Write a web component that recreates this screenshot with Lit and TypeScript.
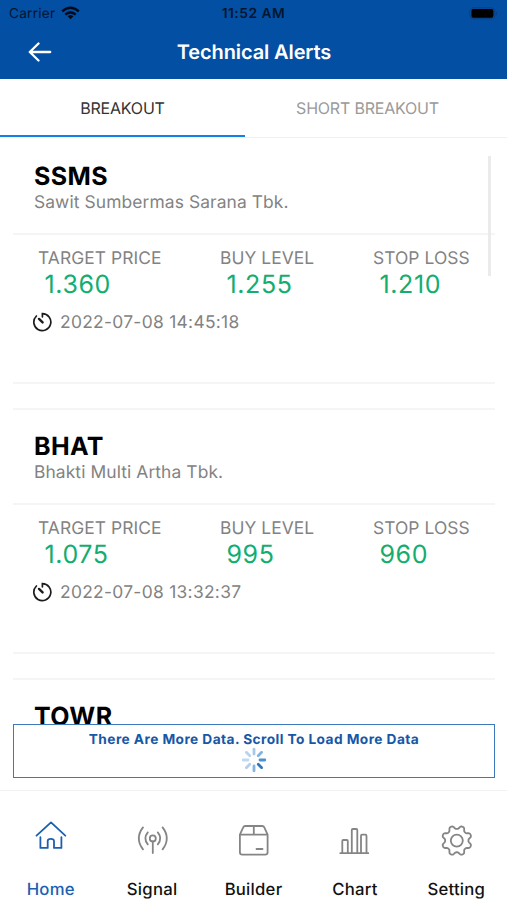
import { LitElement, html, css, svg } from "lit";
import { customElement, property } from "lit/decorators.js";

interface Alert {
  code: string;
  name: string;
  target: string;
  buy: string;
  stop: string;
  time: string;
}

const ALERTS: Alert[] = [
  { code: "SSMS", name: "Sawit Sumbermas Sarana Tbk.", target: "1.360", buy: "1.255", stop: "1.210", time: "2022-07-08 14:45:18" },
  { code: "BHAT", name: "Bhakti Multi Artha Tbk.", target: "1.075", buy: "995", stop: "960", time: "2022-07-08 13:32:37" },
];

const gearPath = (() => {
  const points: string[] = [];
  for (let deg = 0; deg < 360; deg += 3) {
    const wave = Math.cos(((deg - 22.5) * 8 * Math.PI) / 180);
    const r = 13.3 + 1.8 * Math.tanh(1.6 * wave);
    const a = (deg * Math.PI) / 180;
    points.push(`${(16.8 + r * Math.cos(a)).toFixed(2)} ${(15.6 + r * Math.sin(a)).toFixed(2)}`);
  }
  return `M${points.join("L")}Z`;
})();

const ICONS = {
  home: svg`<path d="M2.5 10.7 17-2.6 31.3 10.7M6.4 12.2V22.9H13.7V16Q13.7 13.9 16.9 13.9T20 16V22.9H27.4V12.2"/>`,
  signal: svg`<circle cx="16.8" cy="13.4" r="3"/><path d="M16.8 16.4V28M11.8 7.4Q6.9 13.4 11.8 19.4M21.8 7.4Q26.7 13.4 21.8 19.4M7 2.4Q-1.4 13.4 7 24.4M26.6 2.4Q35 13.4 26.6 24.4"/>`,
  builder: svg`<path d="M2.9 9.6 6.2 2.4Q6.8 1 8.3 1H25.2Q26.7 1 27.3 2.4L30.6 9.6V27.2Q30.6 29.6 28.1 29.6H5.4Q2.9 29.6 2.9 27.2ZM2.9 9.6H30.6M16.8 1V9.6M19.5 24H25.5"/>`,
  chart: svg`<path d="M2.3 28.2H30.3M4.3 28.2V16Q4.3 15 5.3 15H8.8Q9.8 15 9.8 16V28.2M13.8 28.2V5Q13.8 4 14.8 4H18.3Q19.3 4 19.3 5V28.2M23 28.2V11Q23 9.7 24 9.7H27.5Q28.5 9.7 28.5 11V28.2"/>`,
  setting: svg`<path d=${gearPath} /><circle cx="16.8" cy="15.6" r="6"/>`,
};

@customElement("status-bar")
class StatusBar extends LitElement {
  static styles = css`
    :host { display: grid; grid-template-columns: 1fr auto 1fr; align-items: center; height: 27px; padding: 0 9px; color: #04152f; font-size: 13.6px; }
    .carrier { display: flex; align-items: center; gap: 6px; letter-spacing: 0.25px; line-height: 18px; padding-top: 1px; }
    .carrier svg { margin-top: -2px; }
    .time { font-weight: 600; letter-spacing: 0.5px; font-size: 13.8px; line-height: 18px; padding-top: 1px; }
    .battery { justify-self: end; }
    svg { display: block; }
  `;
  render() {
    return html`
      <div class="carrier">Carrier
        <svg width="19" height="14" viewBox="0 0 19 14" fill="none" stroke="#020a1a" stroke-width="2.5">
          <path d="M1.2 5.4Q9.5-2 17.8 5.4M4.3 8.6Q9.5 4.1 14.7 8.6"/>
          <path d="M6.6 10.2Q9.5 8 12.4 10.2L9.5 13.2Z" fill="#020a1a" stroke="none"/>
        </svg>
      </div>
      <div class="time">11:52 AM</div>
      <svg class="battery" width="29" height="14" viewBox="0 0 29 14">
        <rect x="0.8" y="0.8" width="25" height="11" rx="3.6" fill="none" stroke="#0b3f83"/>
        <rect x="2.4" y="2" width="22" height="8.8" rx="2" fill="#000"/>
        <path d="M27 4.4Q29 6.4 27 8.4Z" fill="#0b3f83"/>
      </svg>
    `;
  }
}

@customElement("alert-card")
class AlertCard extends LitElement {
  @property({ attribute: false }) alert!: Alert;
  static styles = css`
    :host { display: block; height: 246px; flex: none; box-sizing: border-box; border-top: 2px solid #f5f5f5; border-bottom: 2px solid #f5f5f5; }
    :host(:first-child) { border-top-color: transparent; }
    .head { height: 95px; box-sizing: border-box; padding: 24px 0 0 21px; border-bottom: 2px solid #f5f5f5; }
    .code { font-size: 25px; line-height: 27px; font-weight: 700; color: #000; letter-spacing: 0.4px; }
    .name { font-size: 17.4px; line-height: 23px; color: #828282; letter-spacing: 0.1px; }
    .stats { display: grid; grid-template-columns: 182px 153px 1fr; padding: 11px 0 0 25px; }
    .label { font-size: 17.4px; line-height: 26px; color: #828282; white-space: nowrap; letter-spacing: 0.07px; }
    .value { font-size: 25px; line-height: 26px; color: #14ad70; padding-left: 6.5px; letter-spacing: 0.6px; }
    .when { display: flex; align-items: center; gap: 8px; height: 25px; padding: 12px 0 0 19px; font-size: 17.4px; color: #828282; letter-spacing: 0.3px; }
    .when svg { margin-top: -2px; }
  `;
  render() {
    const a = this.alert;
    const stat = (label: string, value: string) => html`<div><div class="label">${label}</div><div class="value">${value}</div></div>`;
    return html`
      <div class="head"><div class="code">${a.code}</div><div class="name">${a.name}</div></div>
      ${a.target
        ? html`<div class="stats">${stat("TARGET PRICE", a.target)}${stat("BUY LEVEL", a.buy)}${stat("STOP LOSS", a.stop)}</div>
            <div class="when">
              <svg width="20" height="20" viewBox="0 0 20 20" fill="none" stroke="#1c1c1c" stroke-width="1.7" stroke-linecap="round">
                <path d="M10.4 4.8V1.6A8.5 8.5 0 1 1 4.4 4"/>
                <path d="M7 6.9 10.6 10.4" stroke-width="2.4"/>
              </svg>
              <span>${a.time}</span>
            </div>`
        : ""}
    `;
  }
}

@customElement("nav-item")
class NavItem extends LitElement {
  @property() icon: keyof typeof ICONS = "home";
  @property() label = "";
  @property({ type: Boolean, reflect: true }) active = false;
  static styles = css`
    :host { display: flex; flex-direction: column; align-items: center; color: #111; padding-top: 34px; font-size: 16.7px; font-weight: 550; --stroke: #858585; }
    :host([active]) { color: #1c5fb0; --stroke: #1c5fb0; }
    svg { stroke: var(--stroke); fill: none; stroke-width: 1.8; stroke-linecap: round; stroke-linejoin: round; overflow: visible; display: block; }
    .label { line-height: 20px; margin-top: 22px; letter-spacing: 0.25px; }
  `;
  render() {
    return html`<svg width="33" height="33" viewBox="0 0 33 33">${ICONS[this.icon]}</svg><div class="label">${this.label}</div>`;
  }
}

@customElement("app-root")
class AppRoot extends LitElement {
  static styles = css`
    :host { display: flex; flex-direction: column; height: 900px; width: 507px; overflow: hidden; background: #fff; font-family: Inter, "Liberation Sans", sans-serif; text-rendering: geometricPrecision; }
    .top { height: 79px; background: #034fa3; flex: none; }
    .title-row { display: grid; grid-template-columns: 68px 1fr 68px; align-items: center; height: 50px; }
    .back { justify-self: end; margin-right: 16px; display: block; }
    .title { color: #fff; font-weight: 600; font-size: 20px; text-align: center; letter-spacing: -0.12px; padding-left: 1px; }
    .tabs { display: grid; grid-template-columns: 245px 262px; height: 59px; box-sizing: border-box; border-bottom: 1px solid #f0f0f0; flex: none; font-size: 16px; text-align: center; line-height: 59px; letter-spacing: -0.2px; }
    .tab { color: #9a9a9a; padding-right: 17px; height: 58px; box-sizing: border-box; }
    .tab.on { color: #333; padding-right: 0; border-bottom: 2.5px solid #1480e6; }
    .list { position: relative; flex: 1; min-height: 0; overflow: hidden; display: flex; flex-direction: column; gap: 24px; padding: 0 12px 0 13px; }
    .thumb { position: absolute; right: 16px; top: 18px; width: 3px; height: 120px; background: #ebebeb; }
    .more { position: absolute; left: 13px; right: 12px; bottom: 12px; height: 54px; box-sizing: border-box; border: 1.5px solid #3c78bc; background: #fff; display: flex; flex-direction: column; align-items: center; color: #1757a6; font-weight: 650; font-size: 13.7px; line-height: 20px; padding-top: 5px; }
    .more span { letter-spacing: 0.43px; }
    .more svg { margin-top: -3px; }
    .nav { height: 110px; flex: none; box-sizing: border-box; border-top: 1px solid #f2f2f2; display: grid; grid-template-columns: repeat(5, 1fr); }
  `;
  render() {
    const next = { code: "TOWR", name: "", target: "", buy: "", stop: "", time: "" };
    const spokes = ["#4f8ed0", "#2f77c0", "#86b2e0", "#b3cfec", "#c0d8f0", "#b9d3ee", "#a8c8ea", "#86b2e0"];
    return html`
      <div class="top">
        <status-bar></status-bar>
        <div class="title-row">
          <svg class="back" width="24" height="20" viewBox="0 0 24 20" fill="none" stroke="#fff" stroke-width="2.3" stroke-linecap="round" stroke-linejoin="round">
            <path d="M22.2 10H1.8M10.5 1.5 1.8 10 10.5 18.5"/>
          </svg>
          <div class="title">Technical Alerts</div>
        </div>
      </div>
      <div class="tabs"><div class="tab on">BREAKOUT</div><div class="tab">SHORT BREAKOUT</div></div>
      <div class="list">
        ${[...ALERTS, next].map((a) => html`<alert-card .alert=${a}></alert-card>`)}
        <div class="thumb"></div>
        <div class="more">
          <span>There Are More Data. Scroll To Load More Data</span>
          <svg width="26" height="26" viewBox="-13 -13 26 26" stroke-width="2.8" stroke-linecap="round">
            ${spokes.map((c, i) => svg`<path d="M6 0H10.8" stroke=${c} transform="rotate(${i * 45})"/>`)}
          </svg>
        </div>
      </div>
      <div class="nav">
        <nav-item icon="home" label="Home" active></nav-item>
        <nav-item icon="signal" label="Signal"></nav-item>
        <nav-item icon="builder" label="Builder"></nav-item>
        <nav-item icon="chart" label="Chart"></nav-item>
        <nav-item icon="setting" label="Setting"></nav-item>
      </div>
    `;
  }
}
